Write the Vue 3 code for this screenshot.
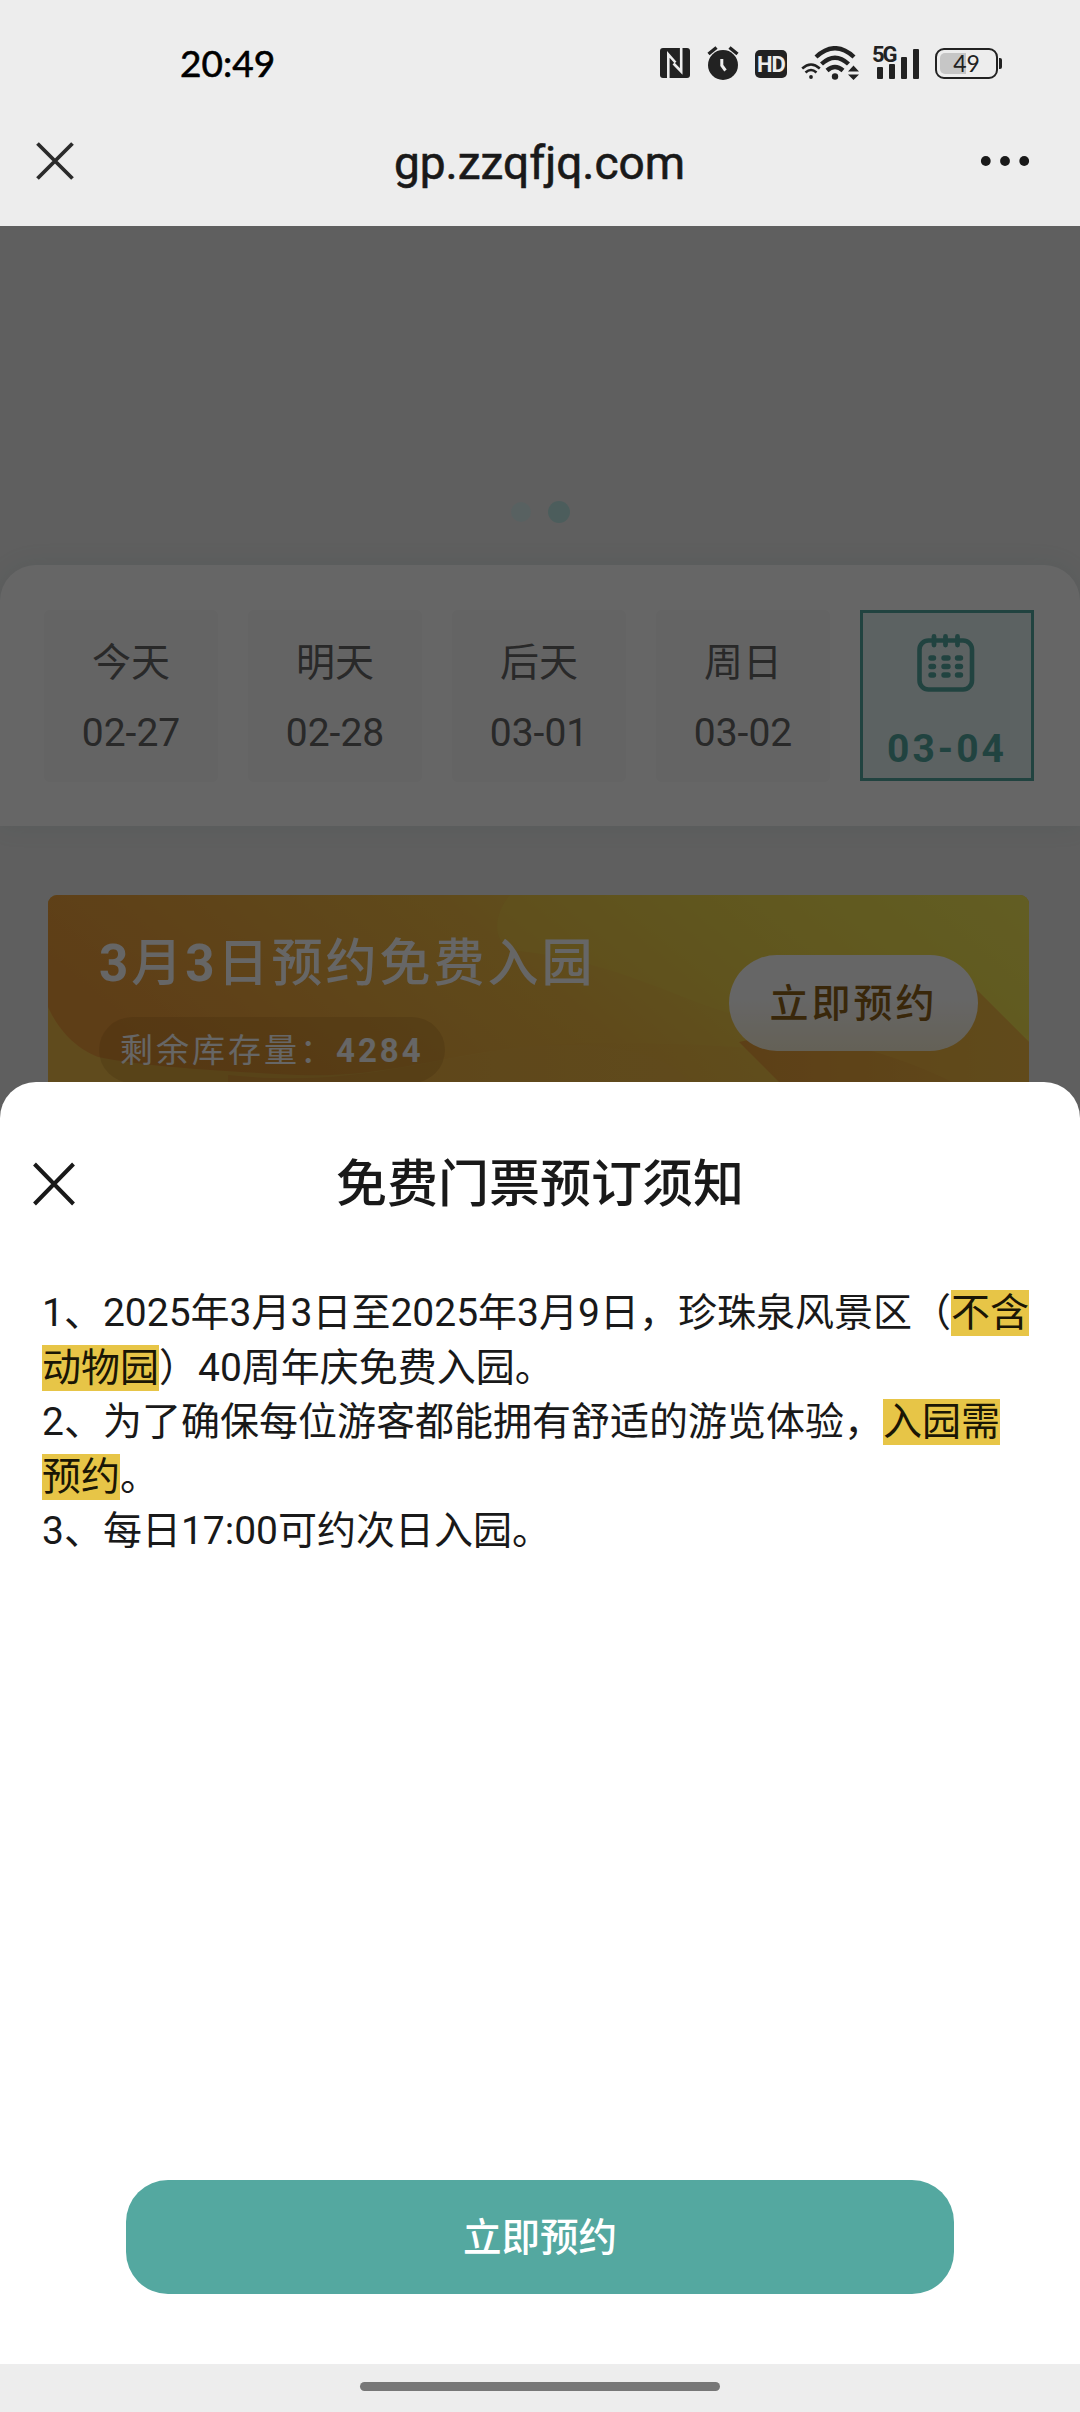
<script setup>
import { ref } from "vue";

const days = ref([
  { label: "今天", date: "02-27" },
  { label: "明天", date: "02-28" },
  { label: "后天", date: "03-01" },
  { label: "周日", date: "03-02" },
]);
const picked = ref("03-04");
const stock = ref(4284);
const battery = ref(49);
const showNotice = ref(true);

const closeNotice = () => {
  showNotice.value = false;
};
</script>
<template>
  <div class="phone">
    <header class="top">
      <div class="status">
        <span class="time">20:49</span>
        <div class="status-icons">
          <svg class="nfc" width="30" height="30" viewBox="0 0 30 30">
            <rect width="30" height="30" rx="3" fill="#222" />
            <path d="M8.300 30V6.500L15.500 14.500M21.200 0V23.500L13.500 15.500" fill="none" stroke="#ededed" stroke-width="2.600" />
          </svg>
          <svg class="alarm" width="32" height="34" viewBox="0 0 32 34">
            <circle cx="16" cy="19" r="15" fill="#222" />
            <path d="M1.500 8L9.500 1.500M30.500 8L22.500 1.500" stroke="#222" stroke-width="3.400" />
            <path d="M14.800 13V19.500L18.500 24.500" fill="none" stroke="#ededed" stroke-width="3" />
          </svg>
          <span class="hd">HD</span>
          <svg class="wifi" width="58" height="34" viewBox="0 0 58 34">
            <g fill="none" stroke="#222">
              <path d="M1.200 22.500Q10 14.500 18.800 22.500M4.500 26.500Q10 21.500 15.500 26.500" stroke-width="2.500" />
              <path d="M15 11Q34 -6.500 53 11M20.500 18Q34 5.500 47.500 18M26 24.500Q34 17.500 42 24.500" stroke-width="4.400" />
            </g>
            <circle cx="10" cy="31" r="1.900" fill="#222" />
            <circle cx="34" cy="30.500" r="3.200" fill="#222" />
            <path d="M47 25.500L52.500 19.500L58 25.500ZM47 28.500H58L52.500 34Z" fill="#222" />
          </svg>
          <div class="signal">
            <span class="net">5G</span>
            <i class="bar b1"></i>
            <i class="bar b2"></i>
            <i class="bar b3"></i>
            <i class="bar b4"></i>
          </div>
          <div class="battery">
            <div class="cell">
              <div class="level" :style="{ width: battery + '%' }"></div>
              <span class="percent">{{ battery }}</span>
            </div>
            <i class="nub"></i>
          </div>
        </div>
      </div>
      <div class="navbar">
        <svg width="38" height="38" viewBox="0 0 38 38">
          <path d="M1.500 1.500L36.500 36.500M36.500 1.500L1.500 36.500" stroke="#2b2b2b" stroke-width="3.800" />
        </svg>
        <span class="host">gp.zzqfjq.com</span>
        <svg width="50" height="12" viewBox="0 0 50 12">
          <circle cx="5.800" cy="6" r="4.900" fill="#191919" />
          <circle cx="25" cy="6" r="4.900" fill="#191919" />
          <circle cx="44.200" cy="6" r="4.900" fill="#191919" />
        </svg>
      </div>
    </header>

    <main class="page">
      <div class="swiper">
        <i class="dot"></i>
        <i class="dot on"></i>
      </div>
      <section class="dates">
        <div v-for="day in days" :key="day.date" class="day">
          <span>{{ day.label }}</span>
          <span>{{ day.date }}</span>
        </div>
        <div class="day active">
          <svg width="58" height="58" viewBox="0 0 58 58">
            <rect x="2.500" y="6.500" width="52.500" height="49" rx="9" fill="none" stroke="#54a8a0" stroke-width="4.600" />
            <path d="M17 2.500V11M28.500 2.500V11M40.500 2.500V11" stroke="#54a8a0" stroke-width="4.800" stroke-linecap="round" />
            <path
              d="M14 24H16.500M27 24H31M40.500 24H43.500M14 32.500H16.500M27 32.500H31M40.500 32.500H43.500M14 41H16.500M27 41H31M40.500 41H43.500"
              stroke="#54a8a0"
              stroke-width="5.400"
              stroke-linecap="round"
            />
          </svg>
          <span>{{ picked }}</span>
        </div>
      </section>
      <section class="ticket">
        <svg class="ticket-bg" width="981" height="240" viewBox="0 0 981 240">
          <defs>
            <linearGradient id="base" x1="0" x2="1" y1="0.300" y2="0">
              <stop offset="0" stop-color="#ec9b3a" />
              <stop offset="0.450" stop-color="#efba44" />
              <stop offset="0.750" stop-color="#f3dc50" />
              <stop offset="1" stop-color="#f7ee5c" />
            </linearGradient>
            <linearGradient id="blob" x1="0" x2="1">
              <stop offset="0" stop-color="#ec9c3a" />
              <stop offset="0.500" stop-color="#eeb443" />
              <stop offset="1" stop-color="#f2c848" />
            </linearGradient>
            <linearGradient id="cast" x1="0" x2="1">
              <stop offset="0" stop-color="#e89f3a" />
              <stop offset="1" stop-color="#f0b643" />
            </linearGradient>
          </defs>
          <rect width="981" height="240" fill="#efbb49" />
          <path d="M0 0H981V240H560C700 210 640 150 520 150C420 150 350 184 250 180C170 176 100 172 50 162C20 150 6 125 0 112Z" fill="url(#base)" />
          <path d="M462 0C445 20 442 50 470 56C570 66 640 110 690 120C800 160 900 150 981 140V0Z" fill="#f0e04c" fill-opacity="0.250" />
          <path d="M180 180C330 196 400 150 540 148C650 148 760 150 900 187V240H180Z" fill="url(#blob)" fill-opacity="0.600" />
          <path d="M691 147L784 240H981V147L929 95Z" fill="url(#cast)" />
          <path d="M800 150Q860 164 910 190V240H981V147L929 95Z" fill="#f3bf47" fill-opacity="0.450" />
        </svg>
        <div class="ticket-body">
          <div class="info">
            <h2><b>3</b>月<b>3</b>日预约免费入园</h2>
            <p class="stock">剩余库存量：<b>{{ stock }}</b></p>
          </div>
          <button class="book">立即预约</button>
        </div>
      </section>

      <div v-if="showNotice" class="mask">
        <section class="sheet">
          <div class="sheet-head">
            <svg width="42" height="44" viewBox="0 0 42 44" @click="closeNotice">
              <path d="M1.500 2L40.500 42M40.500 2L1.500 42" stroke="#191919" stroke-width="4" />
            </svg>
            <h3>免费门票预订须知</h3>
          </div>
          <div class="notice">
            <p>1、2025年3月3日至2025年3月9日，珍珠泉风景区（<mark>不含<br />动物园</mark>）40周年庆免费入园。</p>
            <p>2、为了确保每位游客都能拥有舒适的游览体验，<mark>入园需<br />预约</mark>。</p>
            <p>3、每日17:00可约次日入园。</p>
          </div>
          <button class="confirm">立即预约</button>
        </section>
      </div>
    </main>

    <footer class="gesture"><i></i></footer>
  </div>
</template>
<style>
body {
  margin: 0;
}
</style>
<style scoped>
.phone {
  display: flex;
  flex-direction: column;
  width: 1080px;
  height: 2412px;
  overflow: hidden;
  font-family: Roboto, "Noto Sans CJK SC", sans-serif;
  background-color: #ededed;
}
h2,
h3,
p {
  margin: 0;
}
button {
  border: none;
  padding: 0;
  font-family: inherit;
}

/* status bar and title */
.top {
  height: 226px;
  flex: none;
}
.status {
  display: flex;
  align-items: center;
  justify-content: space-between;
  height: 126px;
  padding: 0 78px 0 180px;
}
.time {
  font-family: Lato, sans-serif;
  font-size: 37px;
  line-height: 40px;
  color: #000;
  -webkit-text-stroke: 0.6px #000;
}
.status-icons {
  display: flex;
  align-items: center;
}
.alarm {
  margin-left: 17px;
}
.hd {
  width: 32px;
  height: 28px;
  margin: 2px 0 0 16px;
  border-radius: 5px;
  background-color: #222;
  color: #ededed;
  font-size: 22px;
  font-weight: 700;
  line-height: 29px;
  text-align: center;
  letter-spacing: -1px;
}
.wifi {
  margin-left: 14px;
}
.signal {
  position: relative;
  display: flex;
  align-items: flex-end;
  gap: 6px;
  height: 32px;
  padding-left: 4px;
  margin-left: 14px;
}
.net {
  position: absolute;
  left: -1px;
  top: -3px;
  font-size: 22px;
  font-weight: 700;
  line-height: 22px;
  letter-spacing: -2px;
  color: #222;
}
.bar {
  width: 6px;
  background-color: #222;
  border-radius: 1px;
}
.b1 {
  height: 12px;
}
.b2 {
  height: 15px;
}
.b3 {
  height: 22px;
}
.b4 {
  height: 30px;
}
.battery {
  display: flex;
  align-items: center;
  margin-left: 16px;
}
.cell {
  position: relative;
  width: 53px;
  height: 21px;
  padding: 3px;
  border: 2px solid #222;
  border-radius: 9px;
}
.level {
  height: 100%;
  border-radius: 5px 0 0 5px;
  background-color: #c6c6c6;
}
.percent {
  position: absolute;
  inset: 0;
  font-family: Lato, sans-serif;
  font-size: 23px;
  line-height: 27px;
  text-align: center;
  color: #222;
}
.nub {
  width: 3px;
  height: 11px;
  margin-left: 1px;
  background-color: #222;
  border-radius: 0 2px 2px 0;
}
.navbar {
  display: flex;
  align-items: center;
  justify-content: space-between;
  height: 70px;
  padding: 0 50px 0 36px;
}
.host {
  padding-left: 25px;
  padding-top: 4px;
  font-size: 46px;
  line-height: 54px;
  color: #191919;
  -webkit-text-stroke: 0.6px #191919;
}

/* booking page */
.page {
  position: relative;
  flex: 1;
  overflow: hidden;
}
.swiper {
  display: flex;
  align-items: flex-end;
  justify-content: center;
  gap: 17px;
  height: 339px;
  padding-bottom: 42px;
  box-sizing: border-box;
}
.dot {
  width: 20px;
  height: 20px;
  margin-bottom: 1px;
  border-radius: 50%;
  background-color: #ddf2f3;
}
.dot.on {
  width: 22px;
  height: 22px;
  margin-bottom: 0;
  background-color: #bfe8e6;
}
.dates {
  display: flex;
  gap: 30px;
  height: 261px;
  padding: 45px 44px;
  box-sizing: border-box;
  border-radius: 36px 36px 0 0;
  background-color: #fff;
  box-shadow: 0 0 24px rgba(84, 168, 160, 0.12);
}
.day {
  display: flex;
  flex-direction: column;
  align-items: center;
  width: 174px;
  height: 172px;
  padding-top: 18px;
  box-sizing: border-box;
  border-radius: 6px;
  background-color: #f9f9f9;
  color: #666;
  font-size: 39px;
  line-height: 70px;
}
.day.active {
  height: 171px;
  padding-top: 21px;
  border: 3px solid #54a8a0;
  border-radius: 0;
  background-color: #e5f4f4;
  color: #54a8a0;
  font-weight: 700;
  letter-spacing: 3px;
}
.day.active svg {
  flex: none;
  margin-right: 2px;
}
.day.active span {
  margin-top: 24px;
  line-height: 66px;
}
.ticket {
  position: relative;
  width: 981px;
  height: 240px;
  margin: 69px 0 0 48px;
  border-radius: 9px;
  overflow: hidden;
}
.ticket-bg {
  position: absolute;
  left: 0;
  top: 0;
}
.ticket-body {
  position: relative;
  display: flex;
  justify-content: space-between;
  padding: 33px 51px 0;
}
.ticket h2 {
  color: #fff;
  font-size: 51px;
  font-weight: 500;
  line-height: 72px;
  letter-spacing: 3px;
}
.stock {
  width: 346px;
  height: 66px;
  padding-left: 21px;
  margin-top: 17px;
  box-sizing: border-box;
  border-radius: 33px;
  background-color: rgba(100, 60, 0, 0.14);
  color: #fff;
  font-size: 33px;
  line-height: 67px;
  letter-spacing: 3px;
  white-space: nowrap;
}
.book {
  width: 249px;
  height: 96px;
  padding-bottom: 6px;
  margin-top: 27px;
  border-radius: 48px;
  background: linear-gradient(#fff 45%, #fbf2d8);
  color: #8e6219;
  font-size: 39px;
  font-weight: 500;
  letter-spacing: 3px;
}

/* bottom sheet */
.mask {
  position: absolute;
  inset: 0;
  display: flex;
  flex-direction: column;
  justify-content: flex-end;
  background-color: rgba(0, 0, 0, 0.6);
}
.sheet {
  display: flex;
  flex-direction: column;
  height: 1282px;
  box-sizing: border-box;
  padding-bottom: 70px;
  border-radius: 36px 36px 0 0;
  background-color: #fff;
  color: #191919;
}
.sheet-head {
  display: flex;
  align-items: center;
  height: 203px;
  padding-left: 33px;
}
.sheet-head h3 {
  flex: 1;
  padding-top: 2px;
  padding-right: 75px;
  font-size: 51px;
  font-weight: 500;
  line-height: 60px;
  text-align: center;
}
.notice {
  flex: 1;
  padding: 1px 0 0 42px;
  font-size: 39px;
  line-height: 54.500px;
  white-space: nowrap;
}
.notice mark {
  background-color: #e7c547;
  color: #1a1605;
}
.confirm {
  align-self: center;
  width: 828px;
  height: 114px;
  padding-bottom: 6px;
  border-radius: 42px;
  background-color: #54a8a0;
  color: #fff;
  font-size: 38.500px;
  font-weight: 500;
}
.gesture {
  display: flex;
  justify-content: center;
  height: 48px;
  padding-top: 18px;
  box-sizing: border-box;
}
.gesture i {
  width: 360px;
  height: 9px;
  border-radius: 5px;
  background-color: #777;
}
</style>
